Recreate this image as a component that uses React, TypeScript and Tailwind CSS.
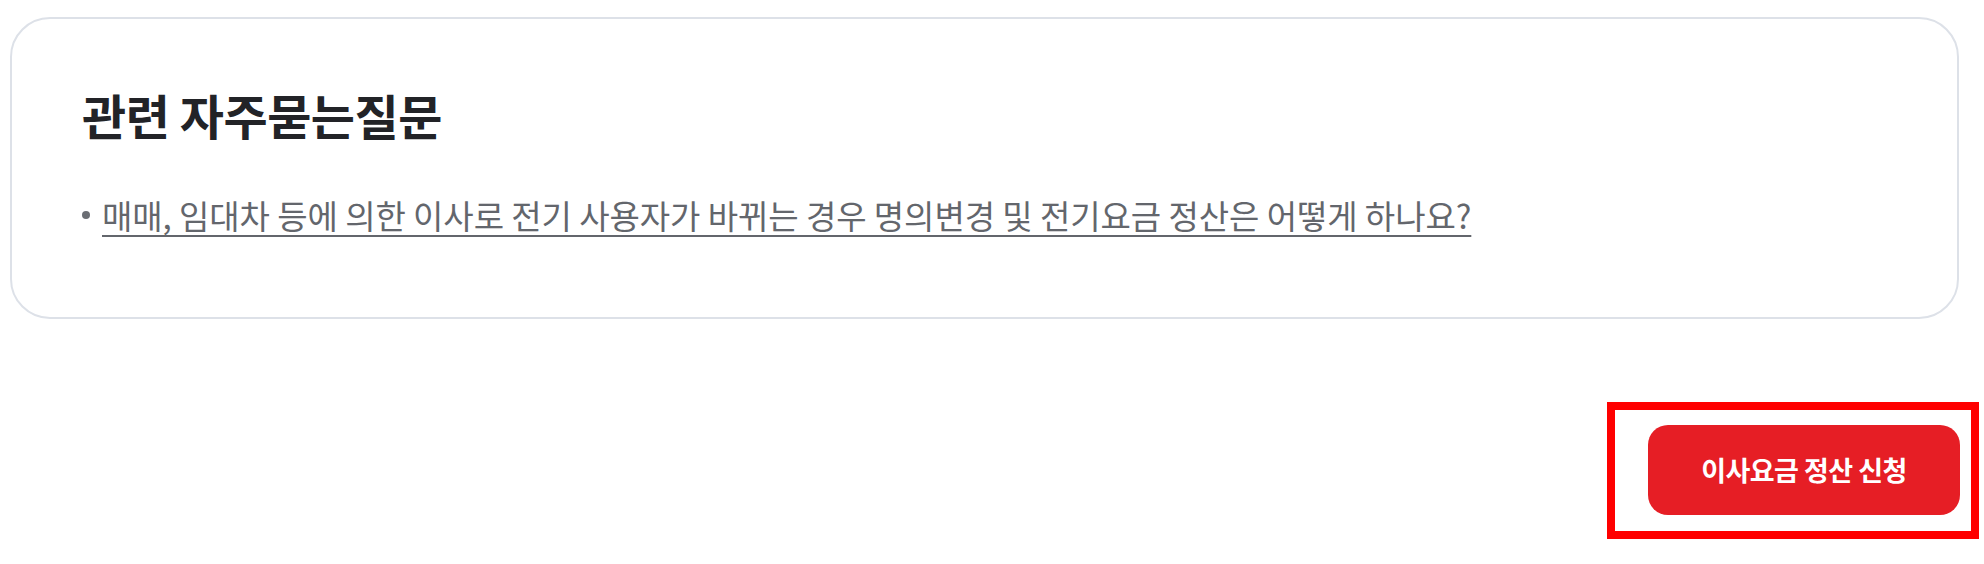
import React from 'react';

const font = { fontFamily: '"Noto Sans CJK KR", "Noto Sans", sans-serif' };

export default function App() {
  return (
    <div className="w-[1984px] h-[564px] bg-white" style={font}>
      <div className="pt-[17px] pl-[10px] pr-[25px]">
        <div className="h-[302px] border-2 border-[#dde1e8] rounded-[40px] pl-[70px] pt-[65px]">
          <h2 className="text-[48px] leading-[60px] font-bold text-[#222327] tracking-[-0.01em]">관련 자주묻는질문</h2>
          <ul className="mt-[49px]">
            <li className="flex items-center text-[33px] leading-[44px] text-[#63666c]">
              <span className="w-[8px] h-[8px] rounded-full bg-[#6b6e74] mr-[12px]" />
              <a href="#" className="underline decoration-2 underline-offset-[6px] tracking-[-0.002em]">
                매매, 임대차 등에 의한 이사로 전기 사용자가 바뀌는 경우 명의변경 및 전기요금 정산은 어떻게 하나요?
              </a>
            </li>
          </ul>
        </div>
      </div>
      <div className="flex justify-end pr-[5px] mt-[83px]">
        <div className="border-8 border-[#ff0000] pt-[15px] pl-[33px] pr-[11px] pb-[16px]">
          <button className="w-[312px] h-[90px] rounded-[20px] bg-[#e61e25] text-white text-[27px] font-bold tracking-[-0.02em]">
            이사요금 정산 신청
          </button>
        </div>
      </div>
    </div>
  );
}
